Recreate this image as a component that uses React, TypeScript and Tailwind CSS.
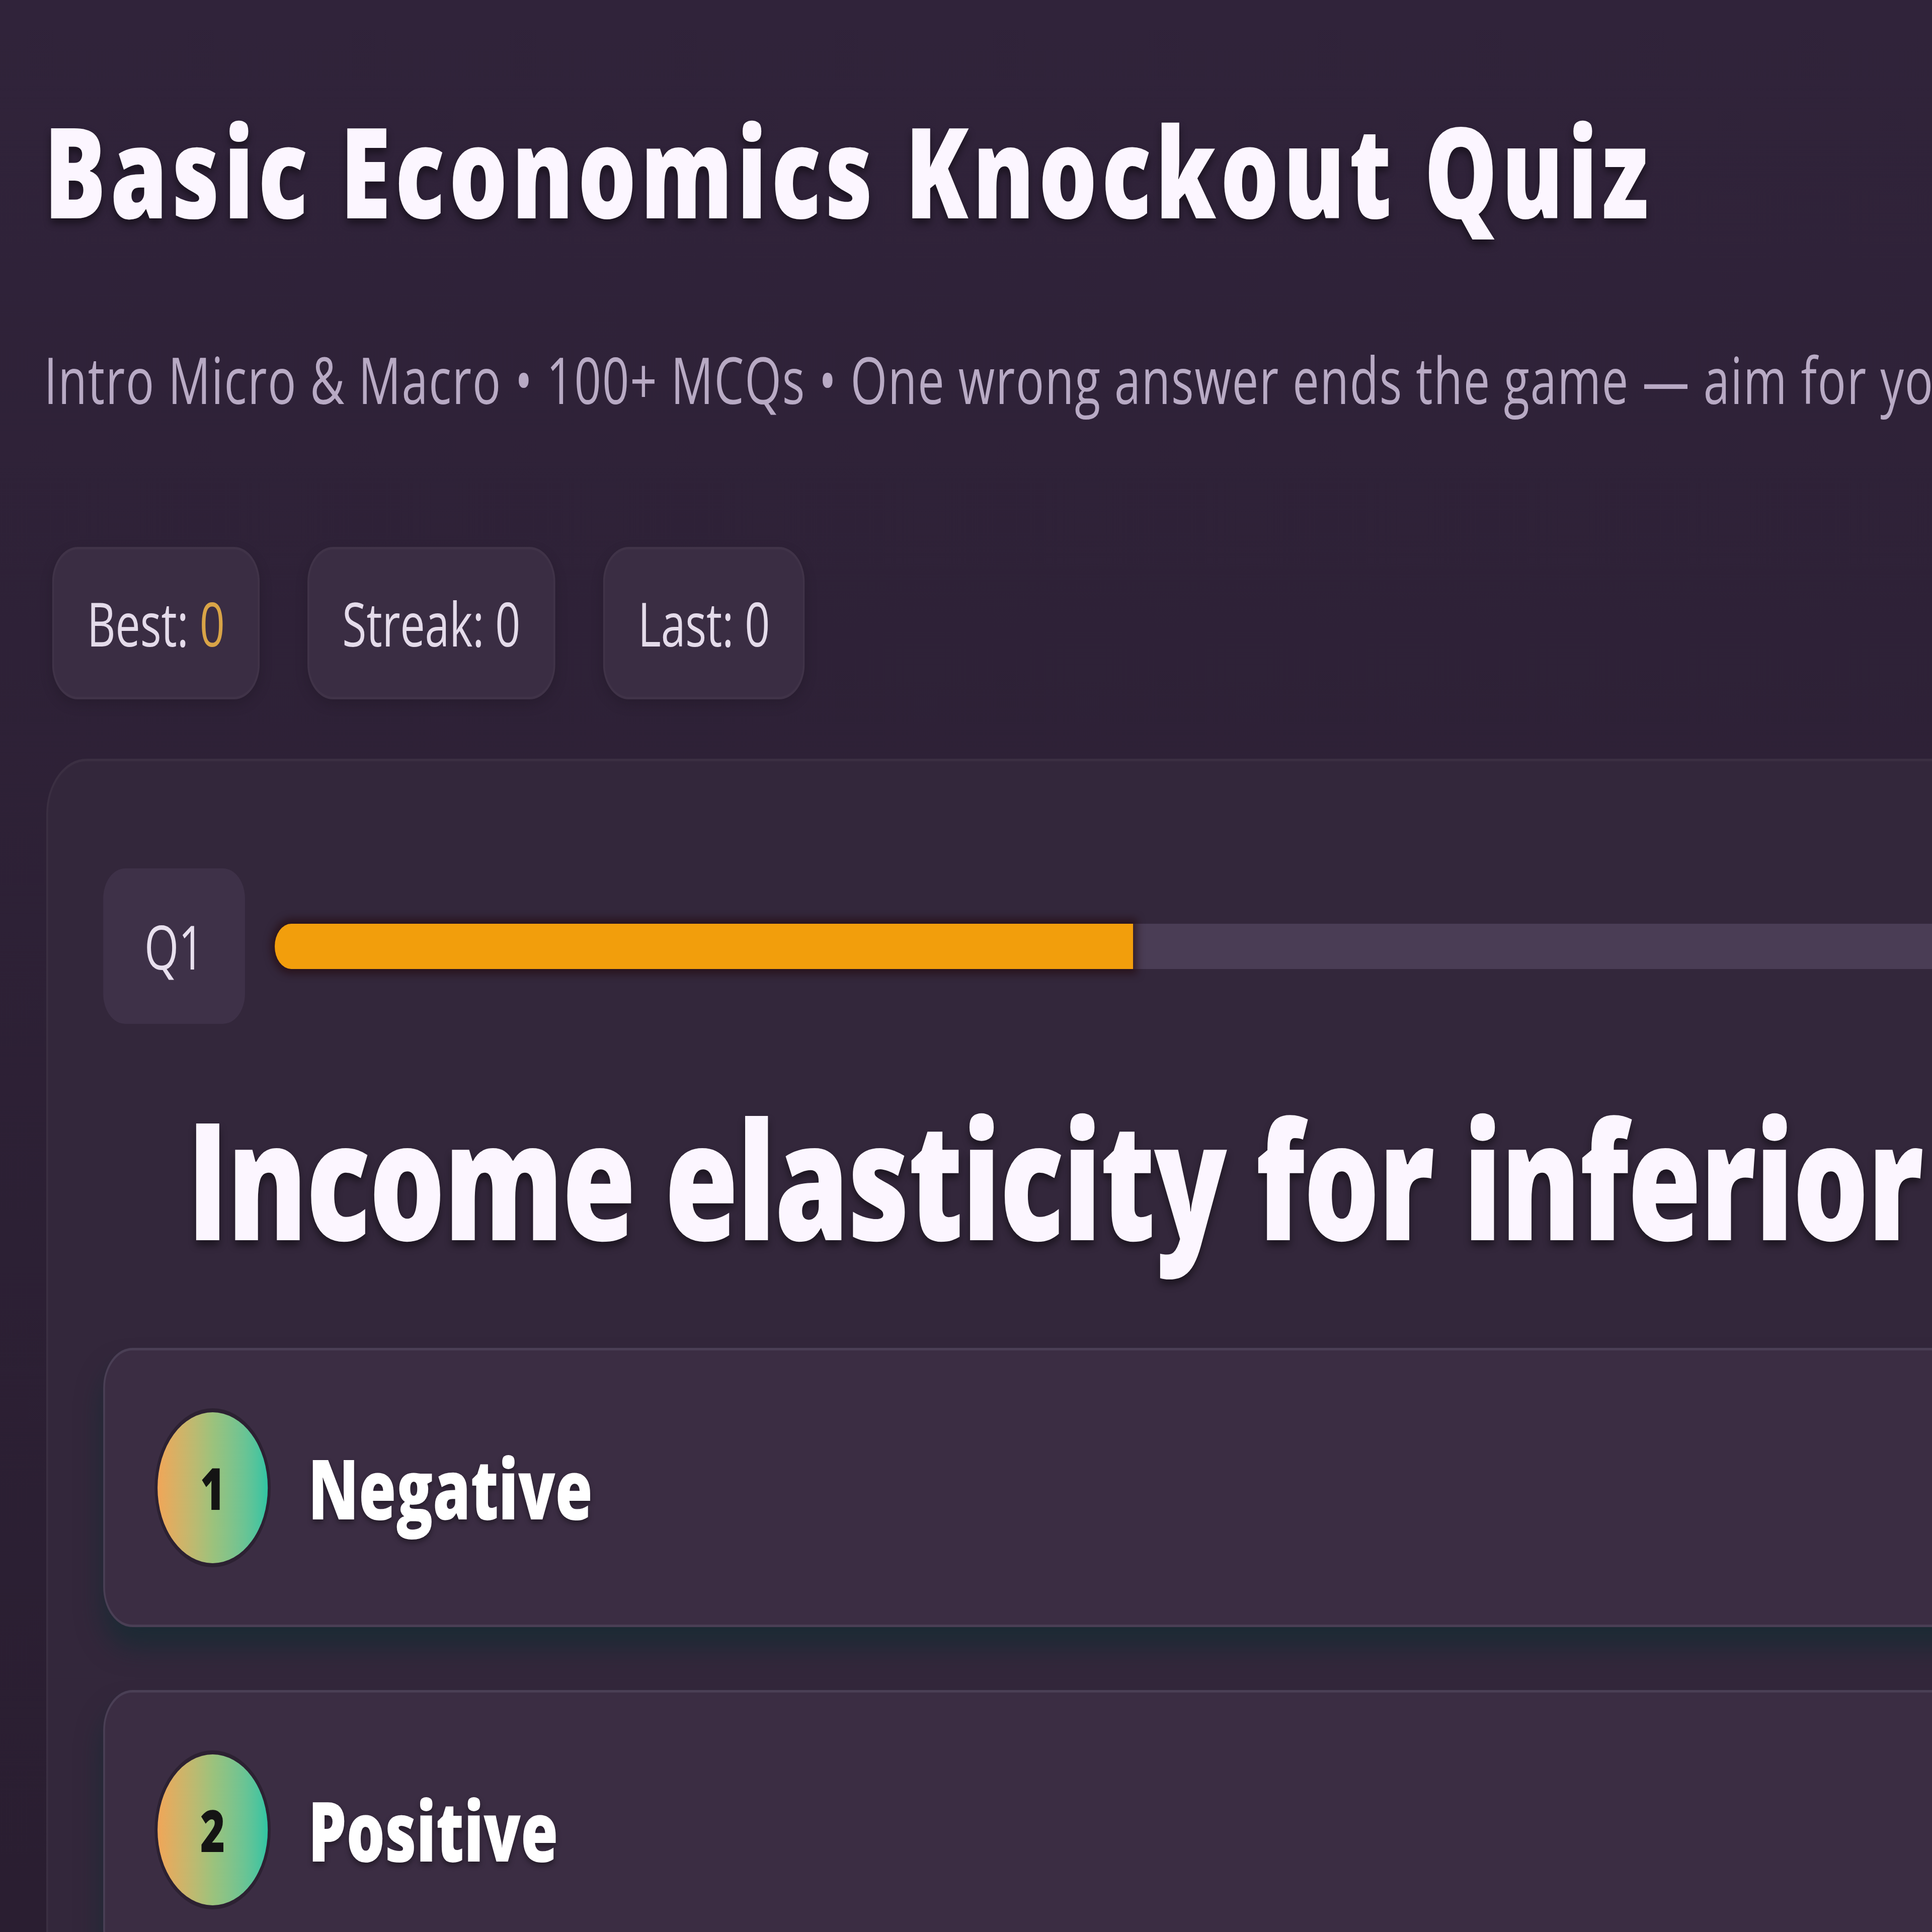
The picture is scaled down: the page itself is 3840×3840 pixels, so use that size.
import React from 'react';

// The reference is a horizontally squeezed capture, so the page is laid out
// at full width and then narrowed with scale-x (circles come out as ellipses).

const stats = [
  { label: 'Best:', value: '0', accent: true },
  { label: 'Streak:', value: '0', accent: false },
  { label: 'Last:', value: '0', accent: false },
];

const options = ['Negative', 'Positive', 'Zero', 'Infinite'];

function StatPill({ label, value, accent }: { label: string; value: string; accent: boolean }) {
  return (
    <div className="flex h-[303px] items-center rounded-[70px] border-[5px] border-white/[0.03] bg-[#3a2d43] px-[90px] text-[120px] leading-none text-[#e4dbea] shadow-[0_10px_30px_rgba(0,0,0,0.15)]">
      <span>{label}</span>
      <span className={accent ? 'ml-[0.25em] text-[#d9a447]' : 'ml-[0.25em]'}>{value}</span>
    </div>
  );
}

function OptionRow({ index, text }: { index: number; text: string }) {
  return (
    <div className="flex h-[555px] shrink-0 items-center rounded-[80px] border-[5px] border-[#4a3f55] bg-[#3b2d43] pl-[143px] shadow-[0_40px_60px_rgba(10,45,48,0.55)]">
      <div className="flex h-[300px] w-[300px] shrink-0 items-center justify-center rounded-full bg-linear-to-r from-[#f0a658] via-[#9cc27c] to-[#2ec4a3] text-[115px] font-extrabold leading-none text-[#141414] shadow-[0_0_0_8px_rgba(0,0,0,0.25)]">
        {index}
      </div>
      <span className="ml-[110px] whitespace-nowrap text-[165px] font-extrabold leading-none text-white [text-shadow:0_6px_12px_rgba(0,0,0,0.4)]">
        {text}
      </span>
    </div>
  );
}

export default function App() {
  return (
    <div className="h-[3840px] w-[3840px] overflow-hidden bg-linear-to-b from-[#30233a] to-[#2a1e31] font-['Open_Sans',sans-serif]">
      <div className="w-[5600px] origin-top-left scale-x-[0.73] pl-[120px] pt-[212px]">
        <h1 className="whitespace-nowrap text-[250px] font-extrabold leading-none tracking-[0.048em] text-[#fcf6ff] [text-shadow:0_10px_18px_rgba(0,0,0,0.45)]">
          Basic Economics Knockout Quiz
        </h1>
        <p className="mt-[228px] whitespace-nowrap text-[128px] leading-none tracking-[0.02em] text-[#b8aac4]">
          Intro Micro &amp; Macro • 100+ MCQs • One wrong answer ends the game — aim for your best streak!
        </p>

        <div className="ml-[22px] mt-[269px] flex gap-[130px]">
          {stats.map((s) => (
            <StatPill key={s.label} {...s} />
          ))}
        </div>

        <div className="ml-[6px] mt-[118px] rounded-[110px] border-[5px] border-white/[0.04] bg-[#33273b] pl-[150px] pt-[213px]">
          <div className="flex items-center">
            <div className="flex h-[309px] w-[386px] shrink-0 items-center justify-center rounded-[60px] bg-[#3e3148] text-[120px] font-medium leading-none text-[#e8e0ee]">
              Q1
            </div>
            <div className="ml-[81px] h-[90px] flex-1 rounded-full bg-[#4a3d55]">
              <div className="h-full w-[2337px] rounded-l-full bg-[#f29e0c] shadow-[0_0_18px_10px_rgba(35,8,12,0.6)]" />
            </div>
          </div>

          <h2 className="ml-[228px] mt-[142px] whitespace-nowrap text-[325px] font-extrabold leading-none tracking-[-0.01em] text-[#fcf6ff] [text-shadow:0_10px_18px_rgba(0,0,0,0.45)]">
            Income elasticity for inferior goods is:
          </h2>

          <div className="mt-[177px] flex flex-col gap-[125px] pb-[200px]">
            {options.map((o, i) => (
              <OptionRow key={o} index={i + 1} text={o} />
            ))}
          </div>
        </div>
      </div>
    </div>
  );
}
